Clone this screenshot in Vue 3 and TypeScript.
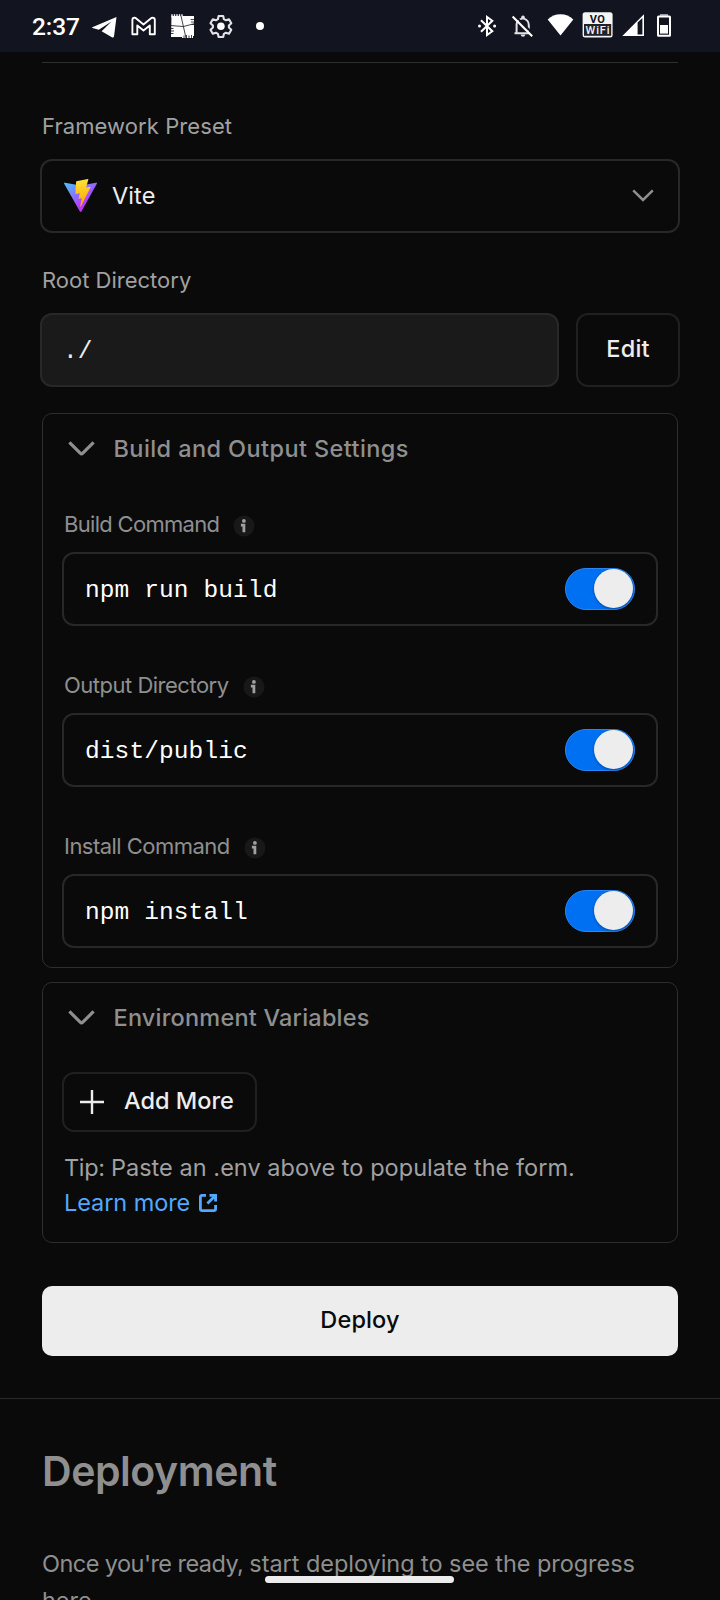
<script setup lang="ts">
import { reactive } from 'vue'

interface Field {
  label: string
  value: string
  enabled: boolean
  kind: string
}

const fields = reactive<Field[]>([
  { label: 'Build Command', value: 'npm run build', enabled: true, kind: 'is-build' },
  { label: 'Output Directory', value: 'dist/public', enabled: true, kind: 'is-output' },
  { label: 'Install Command', value: 'npm install', enabled: true, kind: 'is-install' },
])
</script>

<template>
  <div class="screen">
    <header class="status">
      <div class="status-left">
        <span class="clock">2:37</span>
        <svg class="telegram" width="26" height="52" viewBox="92 0 26 52">
          <path d="M116.5 17 L92.3 27.2 Q91.6 27.6 92.5 28 L98.8 29.8 L111.5 21.6 L101.6 31.3 L112.3 37.4 Q113.6 37.9 114 36.4 Z" fill="#fff" />
        </svg>
        <svg class="gmail" width="26" height="52" viewBox="131 0 26 52">
          <path d="M132.4 34.3 V20 Q132.4 17.7 134.4 17.7 L135.6 18 L143.5 24.4 L151.4 18 L152.6 17.7 Q154.8 17.7 154.8 20 V34.3 H149.8 V25.4 L143.5 30.6 L137.3 25.4 V34.3 Z" fill="none" stroke="#fff" stroke-width="1.9" stroke-linejoin="round" />
        </svg>
        <svg class="patch" width="26" height="52" viewBox="170 0 26 52">
          <path d="M171.5 16H194V36H193V38H182V37H171Z" fill="#fff" />
          <path d="M172 14.3V17.5M174.5 14.3V17.5M177 14.3V17.5M179.5 14.3V17.5M182 14.3V17.5" stroke="#fff" stroke-width="1.4" />
          <path d="M190.5 19.5H195M191 22H195M191.5 24.5H195M170 28.5H173.5M170 31H174M170 33.5H173.5" stroke="#12141f" stroke-width="0.8" />
          <path d="M184 35.5V39M186.5 35V39M189 35.5V39M191.5 35V39" stroke="#12141f" stroke-width="0.8" />
          <path d="M181 16L183.5 27L186 38M170 25.5L183.5 26.5L195 23.5" stroke="#12141f" stroke-width="0.8" fill="none" />
        </svg>
        <svg class="gear" width="24" height="52" viewBox="209.5 0 24 52">
          <path d="M219.1 16h4.6l.7 3.2 2 1.1 3.1-1 2.3 4-2.4 2.2v2l2.4 2.2-2.3 4-3.1-1-2 1.1-.7 3.2h-4.6l-.7-3.2-2-1.1-3.1 1-2.3-4 2.4-2.2v-2l-2.4-2.2 2.3-4 3.1 1 2-1.1z" fill="none" stroke="#e4e4e8" stroke-width="2.1" stroke-linejoin="round" />
          <circle cx="221.4" cy="26.3" r="3.8" fill="#fff" />
        </svg>
        <svg class="more-dot" width="8" height="52" viewBox="256 0 8 52"><circle cx="260" cy="26" r="4" fill="#fff" /></svg>
      </div>
      <div class="status-right">
        <svg class="bluetooth" width="20" height="52" viewBox="477 0 20 52">
          <path d="M481 20.2L492.3 31.2L487 35V17L492.3 20.8L481 31.8" fill="none" stroke="#fff" stroke-width="2" />
          <circle cx="479.5" cy="26" r="1.5" fill="#fff" /><circle cx="494.6" cy="26" r="1.5" fill="#fff" />
        </svg>
        <svg class="bell" width="24" height="52" viewBox="510 0 24 52">
          <path d="M514.5 33.2H529.5M516.6 33V24Q517 20 522.8 18.4Q528.8 19.8 528.8 25V31" fill="none" stroke="#e2e2e6" stroke-width="2" />
          <path d="M520.6 34.6H525.4Q525 36.8 523 36.8Q521 36.8 520.6 34.6ZM521.2 19V16.7Q523 14.4 524.8 16.7V19Z" fill="#e2e2e6" />
          <path d="M514.2 14.9L534 34.7" stroke="#12141f" stroke-width="2" />
          <path d="M512.6 16.4L532.2 36.2" stroke="#fff" stroke-width="2.1" />
        </svg>
        <svg class="wifi" width="27" height="52" viewBox="547.5 0 27 52">
          <path d="M561 35.6L548.2 19.6Q553.5 14.2 561 14.2T573.8 19.6Z" fill="#fff" />
        </svg>
        <svg class="vowifi" width="32" height="52" viewBox="582 0 32 52">
          <rect x="582.6" y="12.3" width="30" height="25.2" rx="2.5" fill="#f4f4f4" />
          <rect x="584" y="24" width="27.2" height="11.8" fill="#20222c" />
          <text x="597.6" y="22.5" text-anchor="middle" class="vo">VO</text>
          <text x="597.6" y="34" text-anchor="middle" class="wf" textLength="24">WiFi</text>
        </svg>
        <svg class="signal" width="22" height="52" viewBox="622 0 22 52">
          <path d="M622.3 36L644 14.3V36Z" fill="#fff" />
          <path d="M637.6 22.6L642.4 18V34.4H637.6Z" fill="#12141f" />
        </svg>
        <svg class="battery" width="14" height="52" viewBox="657 0 14 52">
          <path d="M660 14H668V16H660Z" fill="#9a9ba2" />
          <rect x="658" y="16.4" width="12" height="19.4" rx="0.6" fill="none" stroke="#fff" stroke-width="2" />
          <rect x="660" y="25" width="8" height="8.6" fill="#fff" />
        </svg>
      </div>
    </header>

    <main class="content">
      <div class="rule"></div>

      <label class="label preset-label">Framework Preset</label>
      <button class="box select">
        <svg class="vite" width="33" height="33" viewBox="0 0 256 257">
          <defs>
            <linearGradient id="vite-body" x1="-.8%" x2="57.6%" y1="7.7%" y2="78.4%">
              <stop offset="0%" stop-color="#47bfff" />
              <stop offset="100%" stop-color="#BD34FE" />
            </linearGradient>
            <linearGradient id="vite-bolt" x1="43.4%" x2="50.3%" y1="2.2%" y2="89%">
              <stop offset="0%" stop-color="#FFE14a" />
              <stop offset="8.3%" stop-color="#FFDD35" />
              <stop offset="100%" stop-color="#FFA800" />
            </linearGradient>
          </defs>
          <path fill="url(#vite-body)" d="M255.153 37.938L134.897 252.976c-2.483 4.44-8.862 4.466-11.382.048L.875 37.958c-2.746-4.814 1.371-10.646 6.827-9.67l120.385 21.517a6.537 6.537 0 0 0 2.322-.004l117.867-21.483c5.438-.991 9.574 4.796 6.877 9.62Z" />
          <path fill="url(#vite-bolt)" d="M185.432.063L96.44 17.501a3.268 3.268 0 0 0-2.634 3.014l-5.474 92.456a3.268 3.268 0 0 0 3.997 3.378l24.777-5.718c2.318-.535 4.413 1.507 3.936 3.838l-7.361 36.047c-.495 2.426 1.782 4.5 4.151 3.78l15.304-4.649c2.372-.72 4.652 1.36 4.15 3.788l-11.698 56.621c-.732 3.542 3.979 5.473 5.943 2.437l1.313-2.028l72.516-144.72c1.215-2.423-.88-5.186-3.54-4.672l-25.505 4.922c-2.396.462-4.435-1.77-3.759-4.114l16.646-57.705c.677-2.35-1.37-4.583-3.769-4.113Z" />
        </svg>
        <span class="select-value">Vite</span>
        <svg class="caret" width="22" height="13" viewBox="0 0 22 13">
          <path d="M1.2 1.4L11 11L20.8 1.4" fill="none" stroke="#8f8f8f" stroke-width="2.5" />
        </svg>
      </button>

      <label class="label root-label">Root Directory</label>
      <div class="root-row">
        <div class="box root-input"><span class="mono">./</span></div>
        <button class="box edit"><span>Edit</span></button>
      </div>

      <section class="card build">
        <h2 class="card-head">
          <svg width="28" height="16" viewBox="0 0 28 16">
            <path d="M1.4 1.4L12.2 12.2Q13.5 13.5 14.8 12.2L25.6 1.4" fill="none" stroke="#8f8f8f" stroke-width="3.2" />
          </svg>
          <span class="build-title">Build and Output Settings</span>
        </h2>
        <div class="fields">
          <div v-for="field in fields" :key="field.label" class="field">
            <div class="field-label" :class="field.kind">
              <span>{{ field.label }}</span>
              <svg width="22" height="22" viewBox="0 0 22 22">
                <circle cx="11" cy="11" r="10.5" fill="#181818" />
                <circle cx="10.9" cy="5.9" r="1.9" fill="#a0a0a0" />
                <path d="M7.9 10.2H10.9V17.3" fill="none" stroke="#a0a0a0" stroke-width="2.8" />
              </svg>
            </div>
            <div class="box command">
              <span class="mono">{{ field.value }}</span>
              <button
                class="toggle"
                :class="{ on: field.enabled }"
                role="switch"
                :aria-checked="field.enabled"
                @click="field.enabled = !field.enabled"
              >
                <span class="knob"></span>
              </button>
            </div>
          </div>
        </div>
      </section>

      <section class="card env">
        <h2 class="card-head">
          <svg width="28" height="16" viewBox="0 0 28 16">
            <path d="M1.4 1.4L12.2 12.2Q13.5 13.5 14.8 12.2L25.6 1.4" fill="none" stroke="#8f8f8f" stroke-width="3.2" />
          </svg>
          <span class="env-title">Environment Variables</span>
        </h2>
        <button class="box add">
          <svg width="24" height="24" viewBox="0 0 24 24">
            <path d="M12 0V24M0 12H24" stroke="#ededed" stroke-width="2.4" />
          </svg>
          <span>Add More</span>
        </button>
        <div class="tip"><span class="tip-lead">Tip: </span>Paste an .env above to populate the form.</div>
        <a class="learn">
          <span>Learn more</span>
          <svg width="18" height="18" viewBox="0 0 18 18">
            <path d="M7 1.4H3.2Q1.4 1.4 1.4 3.2V14.8Q1.4 16.6 3.2 16.6H14.8Q16.6 16.6 16.6 14.8V11M10.5 1.4H16.6V7.5M16.5 1.5L8.4 9.6" fill="none" stroke="#52a8ff" stroke-width="2.8" />
          </svg>
        </a>
      </section>

      <button class="deploy"><span>Deploy</span></button>
    </main>

    <section class="deployment">
      <h1>Deployment</h1>
      <p><span class="lead">Once you're ready, </span>start deploying to see the progress<br>here.</p>
    </section>

    <div class="home-bar"></div>
  </div>
</template>

<style>
body {
  background: #0a0a0a;
}
</style>

<style scoped>
.screen {
  position: relative;
  width: 720px;
  height: 1600px;
  overflow: hidden;
  background: #0a0a0a;
  font-family: Inter, "Liberation Sans", sans-serif;
  font-size: 23.5px;
  color: #ededed;
}
.screen * {
  box-sizing: border-box;
}
svg {
  display: block;
  flex: none;
}
button {
  margin: 0;
  padding: 0;
  font: inherit;
  color: inherit;
  background: none;
  border: 0;
}

/* status bar */
.status {
  display: flex;
  justify-content: space-between;
  height: 52px;
  padding: 0 49px 0 32px;
  background: #12141f;
}
.status-left,
.status-right {
  display: flex;
}
.clock {
  width: 60px;
  padding-top: 2px;
  font: 500 24.5px/50px Roboto, sans-serif;
  letter-spacing: -0.1px;
  color: #fff;
}
.gmail { margin-left: 13px; }
.patch { margin-left: 13px; }
.gear { margin-left: 12.5px; }
.more-dot { margin-left: 23.5px; }
.bell { margin-left: 13px; }
.wifi { margin-left: 12.5px; }
.vowifi { margin-left: 8.5px; }
.signal { margin-left: 8px; }
.battery { margin-left: 13px; }
.vo {
  font: 700 11px Roboto, sans-serif;
  letter-spacing: 0.4px;
  fill: #12141f;
}
.wf {
  font: 500 11px Roboto, sans-serif;
  fill: #f4f4f4;
}

/* form */
.content {
  display: flex;
  flex-direction: column;
  padding: 10px 42px 0;
}
.rule {
  height: 1px;
  background: #2e2e2e;
}
.label {
  height: 30px;
  font-size: 22px;
  line-height: 30px;
  color: #a1a1a1;
}
.preset-label {
  margin-top: 48px;
  letter-spacing: 0.08px;
}
.root-label {
  margin-top: 32px;
}
.box {
  display: flex;
  align-items: center;
  height: 74px;
  border: 2px solid #282828;
  border-radius: 12px;
}
.select {
  margin: 18px -2px 0;
  padding: 0 24px 0 22px;
}
.vite {
  margin-top: -1px;
}
.select-value {
  flex: 1;
  margin-top: -2px;
  margin-left: 15px;
  text-align: left;
  letter-spacing: 0.1px;
}
.caret {
  margin-top: -1px;
}
.root-row {
  display: flex;
  gap: 17px;
  margin: 18px -2px 0;
}
.root-input {
  flex: 1;
  padding: 4px 0 0 21px;
  background: #1a1a1a;
}
.mono {
  font-family: "Liberation Mono", monospace;
  font-size: 24.5px;
  letter-spacing: 0.1px;
  line-height: 32px;
}
.edit {
  justify-content: center;
  width: 104px;
  padding-bottom: 3px;
  border-color: #202020;
  font-weight: 500;
  letter-spacing: 0.2px;
}

/* cards */
.card {
  border: 1px solid #2e2e2e;
  border-radius: 10px;
}
.build {
  margin-top: 26px;
  padding: 0 19px 19px;
}
.env {
  margin-top: 14px;
  padding: 0 19px 22px;
}
.card-head {
  display: flex;
  align-items: center;
  gap: 18px;
  height: 69px;
  margin: 0;
  padding-left: 5.5px;
  font-size: 23.5px;
  font-weight: 500;
  color: #8f8f8f;
}
.build-title { letter-spacing: 0.41px; }
.env-title { letter-spacing: 0.21px; }
.fields {
  display: flex;
  flex-direction: column;
  gap: 44px;
  padding-top: 26px;
}
.field-label {
  display: flex;
  align-items: center;
  gap: 14px;
  height: 30px;
  margin-bottom: 13px;
  padding-left: 2px;
  font-size: 22px;
  line-height: 30px;
  color: #8f8f8f;
}
.is-build { letter-spacing: -0.7px; }
.is-output { letter-spacing: -0.5px; }
.is-install { letter-spacing: -0.53px; }
.field-label svg {
  margin-top: 4px;
}
.command {
  justify-content: space-between;
  padding: 0 21px 0 21px;
}
.command .mono {
  padding-top: 3px;
  color: #fff;
}
.toggle {
  display: flex;
  align-items: center;
  width: 70px;
  height: 42px;
  padding: 0 1px 1px;
  border: 1px solid #2e2e2e;
  border-radius: 21px;
  background: #1f1f1f;
}
.toggle.on {
  justify-content: flex-end;
  border-color: #2a85f5;
  background: #0070f3;
}
.knob {
  width: 39px;
  height: 39px;
  border-radius: 50%;
  background: #ededed;
  box-shadow: 0 1px 3px rgba(0, 0, 0, 0.35);
}
.add {
  gap: 20px;
  width: 195px;
  height: 60px;
  margin-top: 20px;
  padding-left: 16px;
  border-color: #202020;
  font-weight: 500;
}
.add span,
.deploy span {
  margin-top: -3px;
}
.tip {
  margin-top: 18px;
  padding-left: 2px;
  line-height: 35px;
  letter-spacing: 0.04px;
  white-space: nowrap;
  color: #a1a1a1;
}
.tip-lead {
  letter-spacing: -0.35px;
}
.learn {
  display: flex;
  align-items: center;
  gap: 8.5px;
  padding-left: 2px;
  line-height: 35px;
  letter-spacing: -0.07px;
  color: #52a8ff;
}
.deploy {
  display: flex;
  align-items: center;
  justify-content: center;
  height: 70px;
  margin-top: 43px;
  border-radius: 10px;
  background: #ededed;
  color: #0a0a0a;
  font-weight: 500;
  letter-spacing: 0.15px;
}

/* next step */
.deployment {
  margin-top: 42px;
  padding: 47px 42px 0;
  border-top: 1px solid #2a2a2a;
  color: #8f8f8f;
}
.deployment h1 {
  margin: 0;
  font-size: 41px;
  font-weight: 600;
  line-height: 50px;
  letter-spacing: -0.45px;
}
.deployment p {
  margin: 49px 0 0;
  line-height: 37px;
  letter-spacing: -0.05px;
  white-space: nowrap;
}
.lead {
  letter-spacing: -0.55px;
}
.home-bar {
  position: absolute;
  left: 265px;
  top: 1575.5px;
  width: 189px;
  height: 7px;
  border-radius: 4px;
  background: #ececec;
}
</style>
